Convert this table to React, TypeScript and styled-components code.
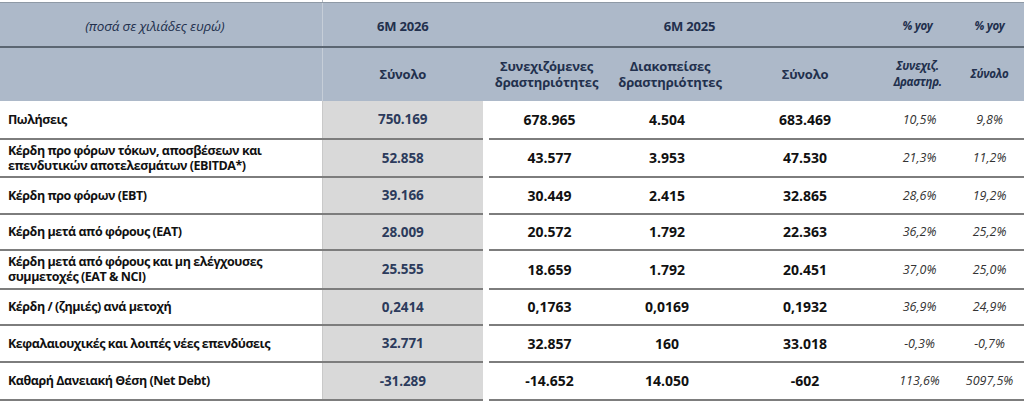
import React from "react";
import styled, { createGlobalStyle } from "styled-components";

const Global = createGlobalStyle`
  html, body { margin: 0; padding: 0; background: #ffffff; }
  body { font-family: "Open Sans", "Noto Sans", sans-serif; color: #111; }
`;

const Page = styled.div`
  width: 1024px;
  height: 402px;
  overflow: hidden;
  background: #fff;
`;

const TopStrip = styled.div`
  height: 2px;
  display: flex;
`;

const TopTick = styled.div`
  margin-left: 322px;
  width: 1px;
  background: #b8bec6;
`;

const Table = styled.table`
  border-collapse: collapse;
  table-layout: fixed;
  width: 1024px;
`;

const Col = styled.col<{ $w: number }>`
  width: ${(p) => p.$w}px;
`;

const HeadRow = styled.tr<{ $h: number }>`
  height: ${(p) => p.$h}px;
  background: #adb9c9;
`;

const HeadCell = styled.th<{ $italic?: boolean; $small?: boolean; $divider?: boolean; $sep?: boolean; $top?: boolean; $shift?: number }>`
  padding: ${(p) => (p.$sep ? "3px" : "0")} ${(p) => (p.$shift && p.$shift < 0 ? -p.$shift : 0)}px 0
    ${(p) => (p.$shift && p.$shift > 0 ? p.$shift : 0)}px;
  text-align: center;
  vertical-align: middle;
  font-weight: ${(p) => (p.$italic && !p.$small ? 500 : 700)};
  font-style: ${(p) => (p.$italic ? "italic" : "normal")};
  font-size: ${(p) => (p.$italic && !p.$small ? 13.5 : p.$small ? 11.5 : 13)}px;
  letter-spacing: ${(p) => (p.$small ? -0.3 : -0.2)}px;
  line-height: 16px;
  color: #22304d;
  border-left: ${(p) => (p.$divider ? "1px solid #c6ced8" : "none")};
  border-bottom: ${(p) => (p.$sep ? "2px solid #5b6672" : "none")};
  border-top: ${(p) => (p.$top ? "1px solid #8f9aa6" : "none")};
`;

const Row = styled.tr<{ $h: number }>`
  height: ${(p) => p.$h}px;
`;

const Label = styled.td`
  padding: 0 0 0 8px;
  font-weight: 700;
  font-size: 12.5px;
  letter-spacing: -0.45px;
  line-height: 15px;
  color: #111;
  border-bottom: 2px solid #7d7d7d;
  vertical-align: middle;
`;

const Current = styled.td`
  background: #d9d9d9;
  text-align: center;
  font-weight: 700;
  font-size: 13.5px;
  letter-spacing: -0.1px;
  color: #2c3b5c;
  border-left: 1px solid #c9c9c9;
  border-bottom: 2px solid #7d7d7d;
  vertical-align: middle;
`;

const Spacer = styled.td`
  background: #fff;
  padding: 0;
`;

const Value = styled.td<{ $shift?: number }>`
  text-align: center;
  padding: 0 ${(p) => (p.$shift && p.$shift < 0 ? -p.$shift : 0)}px 0 ${(p) => (p.$shift && p.$shift > 0 ? p.$shift : 0)}px;
  font-weight: 700;
  font-size: 14px;
  letter-spacing: 0px;
  color: #111;
  border-bottom: 2px solid #7d7d7d;
  vertical-align: middle;
`;

const Pct = styled.td<{ $shift?: number }>`
  text-align: center;
  padding: 0 0 0 ${(p) => p.$shift ?? 0}px;
  font-style: italic;
  font-weight: 400;
  font-size: 12.5px;
  letter-spacing: 0px;
  color: #333;
  border-bottom: 2px solid #7d7d7d;
  vertical-align: middle;
`;

type R = { label: React.ReactNode; h: number; v: string[] };

const rows: R[] = [
  { label: "Πωλήσεις", h: 38, v: ["750.169", "678.965", "4.504", "683.469", "10,5%", "9,8%"] },
  {
    label: (
      <>
        Κέρδη προ φόρων τόκων, αποσβέσεων και
        <br />
        επενδυτικών αποτελεσμάτων (EBITDA*)
      </>
    ),
    h: 38,
    v: ["52.858", "43.577", "3.953", "47.530", "21,3%", "11,2%"],
  },
  { label: "Κέρδη προ φόρων (EBT)", h: 37, v: ["39.166", "30.449", "2.415", "32.865", "28,6%", "19,2%"] },
  { label: "Κέρδη μετά από φόρους (EAT)", h: 36, v: ["28.009", "20.572", "1.792", "22.363", "36,2%", "25,2%"] },
  {
    label: (
      <>
        Κέρδη μετά από φόρους και μη ελέγχουσες
        <br />
        συμμετοχές (EAT &amp; NCI)
      </>
    ),
    h: 39,
    v: ["25.555", "18.659", "1.792", "20.451", "37,0%", "25,0%"],
  },
  { label: "Κέρδη / (ζημιές) ανά μετοχή", h: 36, v: ["0,2414", "0,1763", "0,0169", "0,1932", "36,9%", "24,9%"] },
  { label: "Κεφαλαιουχικές και λοιπές νέες επενδύσεις", h: 37, v: ["32.771", "32.857", "160", "33.018", "-0,3%", "-0,7%"] },
  { label: "Καθαρή Δανειακή Θέση (Net Debt)", h: 38, v: ["-31.289", "-14.652", "14.050", "-602", "113,6%", "5097,5%"] },
];

export default function App() {
  return (
    <Page>
      <Global />
      <TopStrip>
        <TopTick />
      </TopStrip>
      <Table>
        <colgroup>
          <Col $w={322} />
          <Col $w={161} />
          <Col $w={6} />
          <Col $w={121} />
          <Col $w={120} />
          <Col $w={150} />
          <Col $w={75} />
          <Col $w={69} />
        </colgroup>
        <thead>
          <HeadRow $h={44}>
            <HeadCell $italic $sep $top $shift={-12}>(ποσά σε χιλιάδες ευρώ)</HeadCell>
            <HeadCell $divider $sep $top>6M 2026</HeadCell>
            <HeadCell $sep $top colSpan={4} $shift={16}>6M 2025</HeadCell>
            <HeadCell $italic $small $sep $top>% yoy</HeadCell>
            <HeadCell $italic $small $sep $top>% yoy</HeadCell>
          </HeadRow>
          <HeadRow $h={54}>
            <HeadCell />
            <HeadCell $divider>Σύνολο</HeadCell>
            <HeadCell colSpan={2}>
              Συνεχιζόμενες
              <br />
              δραστηριότητες
            </HeadCell>
            <HeadCell>
              Διακοπείσες
              <br />
              δραστηριότητες
            </HeadCell>
            <HeadCell>Σύνολο</HeadCell>
            <HeadCell $italic $small>
              Συνεχιζ.
              <br />
              Δραστηρ.
            </HeadCell>
            <HeadCell $italic $small>Σύνολο</HeadCell>
          </HeadRow>
        </thead>
        <tbody>
          {rows.map((r, i) => (
            <Row key={i} $h={r.h}>
              <Label>{r.label}</Label>
              <Current>{r.v[0]}</Current>
              <Spacer />
              <Value>{r.v[1]}</Value>
              <Value $shift={-6}>{r.v[2]}</Value>
              <Value>{r.v[3]}</Value>
              <Pct $shift={4}>{r.v[4]}</Pct>
              <Pct>{r.v[5]}</Pct>
            </Row>
          ))}
        </tbody>
      </Table>
    </Page>
  );
}
